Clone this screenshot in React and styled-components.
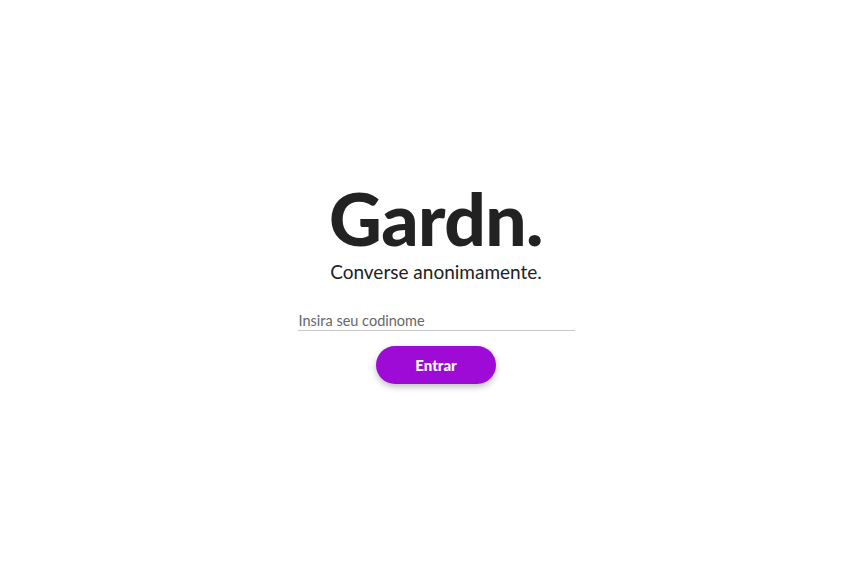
import styled, { createGlobalStyle } from "styled-components";

const GlobalStyle = createGlobalStyle`
  html, body {
    margin: 0;
    padding: 0;
    background: #ffffff;
    font-family: Lato, "Noto Sans", sans-serif;
  }
`;

const Page = styled.main`
  min-height: 100vh;
  display: flex;
  flex-direction: column;
  align-items: center;
  justify-content: center;
  padding-left: 9px;
  box-sizing: border-box;
`;

const Title = styled.h1`
  margin: 0;
  font-size: 73px;
  font-weight: 900;
  line-height: 74px;
  color: #222222;
  letter-spacing: -0.6px;
`;

const Subtitle = styled.p`
  margin: 6px 0 0;
  font-size: 19px;
  line-height: 22px;
  color: #222222;
`;

const Form = styled.form`
  display: flex;
  flex-direction: column;
  align-items: center;
  margin-top: 30px;
`;

const Input = styled.input`
  width: 277px;
  box-sizing: border-box;
  border: none;
  border-bottom: 1px solid #c8c8c8;
  padding: 0 1px 1px;
  font-family: inherit;
  font-size: 14.5px;
  line-height: 16px;
  color: #333333;
  outline: none;
  &::placeholder {
    color: #666666;
  }
`;

const Button = styled.button`
  margin-top: 15px;
  width: 120px;
  height: 38px;
  border: none;
  border-radius: 19px;
  background: #9f0bd6;
  color: #ffffff;
  font-family: inherit;
  font-size: 15px;
  font-weight: 900;
  box-shadow: 0 3px 6px rgba(0, 0, 0, 0.25);
  cursor: pointer;
`;

const App = () => {
  return (
    <Page>
      <GlobalStyle />
      <Title>Gardn.</Title>
      <Subtitle>Converse anonimamente.</Subtitle>
      <Form onSubmit={(e) => e.preventDefault()}>
        <Input placeholder="Insira seu codinome" />
        <Button type="submit">Entrar</Button>
      </Form>
    </Page>
  );
};

export default App;
